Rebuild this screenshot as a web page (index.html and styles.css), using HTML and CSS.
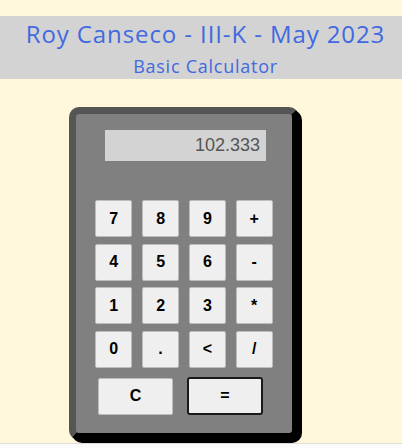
FILE: index.html
```html
<!DOCTYPE html>
<html>
<head>
<meta charset="utf-8">
<link rel="stylesheet" href="styles.css">
</head>
<body>
<div class="header">
  <h1 class="title">Roy Canseco - III-K - May 2023</h1>
  <p class="subtitle">Basic Calculator</p>
</div>
<div class="calc">
  <div class="display">102.333</div>
  <div class="keys">
    <button class="key">7</button>
    <button class="key">8</button>
    <button class="key">9</button>
    <button class="key">+</button>
    <button class="key">4</button>
    <button class="key">5</button>
    <button class="key">6</button>
    <button class="key">-</button>
    <button class="key">1</button>
    <button class="key">2</button>
    <button class="key">3</button>
    <button class="key">*</button>
    <button class="key">0</button>
    <button class="key">.</button>
    <button class="key">&lt;</button>
    <button class="key">/</button>
  </div>
  <div class="bottom-row">
    <button class="key wide">C</button>
    <button class="key wide equals">=</button>
  </div>
</div>
<div class="footer"></div>
</body>
</html>
```
FILE: styles.css
```css
html, body {
  margin: 0;
  padding: 0;
}
body {
  background: #fff8dc;
  font-family: "Liberation Sans", Arial, sans-serif;
  overflow: hidden;
}
.header {
  margin-top: 16px;
  height: 63px;
  box-sizing: border-box;
  padding: 3px 0 0 9px;
  background: #d3d3d3;
  text-align: center;
  color: #4169e1;
  font-family: "Open Sans", sans-serif;
}
.title {
  margin: 0;
  font-size: 24px;
  line-height: 30px;
  font-weight: 400;
  letter-spacing: 0.9px;
}
.subtitle {
  margin: 5px 0 0;
  font-size: 18px;
  line-height: 24px;
  letter-spacing: 0.75px;
}
.calc {
  width: 216px;
  margin: 28px 0 0 69px;
  padding: 16px 0 18px;
  background: #808080;
  border: 7px solid;
  border-color: #555 #000 #000 #555;
  border-radius: 10px;
  box-shadow: 3px 3px 0 #000;
}
.display {
  width: 161px;
  height: 31px;
  box-sizing: border-box;
  margin-left: 29px;
  padding-right: 6px;
  background: #d3d3d3;
  color: #555;
  font-size: 18px;
  line-height: 31px;
  text-align: right;
}
.keys {
  margin-top: 39px;
  display: grid;
  grid-template-columns: repeat(4, 37px);
  grid-auto-rows: 37px;
  column-gap: 9.8px;
  row-gap: 6.5px;
  justify-content: center;
}
.key {
  margin: 0;
  padding: 0;
  background: #efefef;
  border: 1px solid #bdbdbd;
  border-radius: 2px;
  font-family: "Liberation Sans", Arial, sans-serif;
  font-weight: 700;
  font-size: 16px;
  color: #000;
}
.bottom-row {
  margin-top: 9.6px;
  padding-left: 22px;
  display: flex;
  gap: 14px;
  align-items: center;
}
.wide {
  width: 75px;
  height: 37px;
}
.equals {
  width: 76px;
  height: 38px;
  border: 2px solid #1a1a1a;
  border-radius: 3px;
}
.footer {
  margin-top: 3px;
  height: 20px;
  border-top: 1px solid #ddd;
  background: #fbfbfb;
}
```
